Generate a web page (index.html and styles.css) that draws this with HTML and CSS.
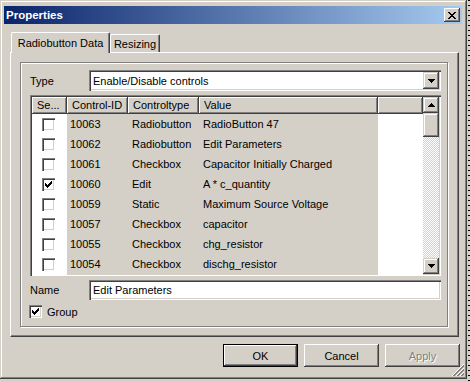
FILE: index.html
```html
<!DOCTYPE html>
<html lang="en">
<head>
    <meta charset="UTF-8">
    <title>Properties</title>
    <link rel="stylesheet" href="styles.css">
</head>
<body>
    <div class="window">
        <div class="caption">
            <span class="caption-title">Properties</span>
            <div class="caption-btn">
                <svg width="8" height="7" viewBox="0 0 8 7"><path d="M0 0h2v1h-2zM6 0h2v1h-2zM1 1h2v1h-2zM5 1h2v1h-2zM2 2h4v1h-4zM3 3h2v1h-2zM2 4h4v1h-4zM1 5h2v1h-2zM5 5h2v1h-2zM0 6h2v1h-2zM6 6h2v1h-2z" fill="#000"/></svg>
            </div>
        </div>

        <div class="tabs">
            <div class="tab active">Radiobutton Data</div>
            <div class="tab">Resizing</div>
        </div>

        <div class="panel">
            <div class="group">
                <div class="field-row">
                    <span class="field-label">Type</span>
                    <div class="combo">
                        <span class="combo-text">Enable/Disable controls</span>
                        <div class="raised-btn combo-btn">
                            <svg width="7" height="4" viewBox="0 0 7 4"><path d="M0 0h7v1h-1v1h-1v1h-1v1h-1v-1h-1v-1h-1v-1h-1z" fill="#000"/></svg>
                        </div>
                    </div>
                </div>

                <div class="listview">
                    <div class="list-body">
                        <div class="list-row list-header">
                            <div class="head-cell">Se...</div>
                            <div class="head-cell">Control-ID</div>
                            <div class="head-cell">Controltype</div>
                            <div class="head-cell">Value</div>
                            <div class="head-cell"></div>
                        </div>
                        <div class="list-row">
                            <div class="cell check-cell"><span class="checkbox"></span></div>
                            <div class="cell">10063</div><div class="cell">Radiobutton</div><div class="cell">RadioButton 47</div><div class="cell blank"></div>
                        </div>
                        <div class="list-row">
                            <div class="cell check-cell"><span class="checkbox"></span></div>
                            <div class="cell">10062</div><div class="cell">Radiobutton</div><div class="cell">Edit Parameters</div><div class="cell blank"></div>
                        </div>
                        <div class="list-row">
                            <div class="cell check-cell"><span class="checkbox"></span></div>
                            <div class="cell">10061</div><div class="cell">Checkbox</div><div class="cell">Capacitor Initially Charged</div><div class="cell blank"></div>
                        </div>
                        <div class="list-row">
                            <div class="cell check-cell"><span class="checkbox">
                                <svg width="7" height="7" viewBox="0 0 7 7"><path d="M0 2h1v1h1v1h1v-1h1v-1h1v-1h1v-1h1v3h-1v1h-1v1h-1v1h-1v1h-1v-1h-1v-1h-1v-1h-1z" fill="#000"/></svg>
                            </span></div>
                            <div class="cell">10060</div><div class="cell">Edit</div><div class="cell">A * c_quantity</div><div class="cell blank"></div>
                        </div>
                        <div class="list-row">
                            <div class="cell check-cell"><span class="checkbox"></span></div>
                            <div class="cell">10059</div><div class="cell">Static</div><div class="cell">Maximum Source Voltage</div><div class="cell blank"></div>
                        </div>
                        <div class="list-row">
                            <div class="cell check-cell"><span class="checkbox"></span></div>
                            <div class="cell">10057</div><div class="cell">Checkbox</div><div class="cell">capacitor</div><div class="cell blank"></div>
                        </div>
                        <div class="list-row">
                            <div class="cell check-cell"><span class="checkbox"></span></div>
                            <div class="cell">10055</div><div class="cell">Checkbox</div><div class="cell">chg_resistor</div><div class="cell blank"></div>
                        </div>
                        <div class="list-row">
                            <div class="cell check-cell"><span class="checkbox"></span></div>
                            <div class="cell">10054</div><div class="cell">Checkbox</div><div class="cell">dischg_resistor</div><div class="cell blank"></div>
                        </div>
                    </div>
                    <div class="scrollbar">
                        <div class="raised-btn scroll-btn">
                            <svg width="7" height="4" viewBox="0 0 7 4"><path d="M3 0h1v1h1v1h1v1h1v1h-7v-1h1v-1h1v-1h1z" fill="#000"/></svg>
                        </div>
                        <div class="raised-btn scroll-thumb"></div>
                        <div class="scroll-track"></div>
                        <div class="raised-btn scroll-btn">
                            <svg width="7" height="4" viewBox="0 0 7 4"><path d="M0 0h7v1h-1v1h-1v1h-1v1h-1v-1h-1v-1h-1v-1h-1z" fill="#000"/></svg>
                        </div>
                    </div>
                </div>

                <div class="field-row name-row">
                    <span class="field-label">Name</span>
                    <div class="textbox">Edit Parameters</div>
                </div>

                <div class="check-row">
                    <span class="checkbox">
                        <svg width="7" height="7" viewBox="0 0 7 7"><path d="M0 2h1v1h1v1h1v-1h1v-1h1v-1h1v-1h1v3h-1v1h-1v1h-1v1h-1v1h-1v-1h-1v-1h-1v-1h-1z" fill="#000"/></svg>
                    </span>
                    <span>Group</span>
                </div>
            </div>
        </div>

        <div class="buttons">
            <div class="btn default">OK</div>
            <div class="btn">Cancel</div>
            <div class="btn disabled">Apply</div>
        </div>

        <svg class="grip" width="12" height="12" viewBox="0 0 12 12">
            <g stroke-width="1" shape-rendering="crispEdges">
                <path d="M12 0L0 12M12 4L4 12M12 8L8 12" stroke="#fff"/>
                <path d="M12 1L1 12M12 2L2 12M12 5L5 12M12 6L6 12M12 9L9 12M12 10L10 12" stroke="#808080"/>
            </g>
        </svg>
    </div>
</body>
</html>
```

FILE: styles.css
```css
* {
    box-sizing: border-box;
}

body {
    margin: 0;
    width: 470px;
    height: 382px;
    overflow: hidden;
    background:
        repeating-linear-gradient(to bottom, #000 0 1px, transparent 1px 5px) 468px 0 / 2px 100% no-repeat,
        #d4d0c8;
    font-family: "Liberation Sans", Arial, sans-serif;
    font-size: 11px;
    color: #000;
}

.window {
    position: relative;
    width: 467px;
    height: 379px;
    display: flex;
    flex-direction: column;
    padding: 6px 5px 0 4px;
    background-color: #d4d0c8;
    box-shadow: inset -1px -1px #404040, inset 1px 1px #d4d0c8, inset -2px -2px #808080, inset 2px 2px #fff;
}

/* title bar */
.caption {
    height: 18px;
    display: flex;
    align-items: center;
    justify-content: space-between;
    padding: 0 2px 0 2px;
    background: linear-gradient(to right, #0a246a, #a6caf0);
    color: #fff;
    font-weight: bold;
    font-size: 11.5px;
}

.caption-btn {
    width: 16px;
    height: 14px;
    display: flex;
    align-items: center;
    justify-content: center;
    background-color: #d4d0c8;
    box-shadow: inset -1px -1px #404040, inset 1px 1px #fff, inset -2px -2px #808080;
}

.raised-btn {
    display: flex;
    align-items: center;
    justify-content: center;
    background-color: #d4d0c8;
    box-shadow: inset -1px -1px #404040, inset 1px 1px #d4d0c8, inset -2px -2px #808080, inset 2px 2px #fff;
}

/* tabs */
.tabs {
    display: flex;
    align-items: flex-end;
    height: 20px;
    margin: 8px 0 0 7px;
}

.tab {
    height: 18px;
    display: flex;
    align-items: center;
    justify-content: center;
    border: 1px solid #fff;
    border-bottom: none;
    border-right-color: #404040;
    border-radius: 2px 2px 0 0;
    box-shadow: inset -1px 0 #808080;
    width: 50px;
}

.tab.active {
    position: relative;
    z-index: 1;
    width: 99px;
    height: 21px;
    margin-bottom: -1px;
    background-color: #d4d0c8;
}

.panel {
    width: 449px;
    height: 285px;
    margin-left: 6px;
    padding: 9px 0 0 9px;
    border: 1px solid #fff;
    border-right-color: #404040;
    border-bottom-color: #404040;
    box-shadow: inset -1px -1px #808080;
}

.group {
    width: 428px;
    height: 265px;
    display: flex;
    flex-direction: column;
    padding: 7px 6px 0 9px;
    border: 1px solid #808080;
    box-shadow: inset 1px 1px #fff, 1px 1px #fff;
}

.field-row {
    display: flex;
    align-items: center;
}

.field-label {
    width: 59px;
}

.combo,
.textbox,
.listview {
    background-color: #fff;
    box-shadow: inset 1px 1px #808080, inset 2px 2px #404040, inset -1px -1px #fff, inset -2px -2px #d4d0c8;
}

.combo {
    width: 352px;
    height: 21px;
    display: flex;
    align-items: center;
    padding: 2px;
}

.combo-text {
    flex: 1;
    padding-left: 2px;
}

.combo-btn {
    width: 16px;
    height: 17px;
}

.textbox {
    width: 352px;
    height: 20px;
    padding: 0 4px;
    line-height: 20px;
}

.name-row {
    margin-top: 4px;
}

/* list view */
.listview {
    width: 411px;
    height: 181px;
    margin-top: 4px;
    padding: 2px;
    display: flex;
}

.list-body {
    flex: 1;
}

.list-row {
    display: grid;
    grid-template-columns: 35px 61px 71px 179px 1fr;
    height: 20px;
    line-height: 21px;
}

.list-header {
    height: 17px;
    line-height: 17px;
}

.head-cell {
    padding-left: 5px;
    background-color: #d4d0c8;
    box-shadow: inset -1px -1px #404040, inset 1px 1px #fff, inset -2px -2px #808080;
    white-space: nowrap;
    overflow: hidden;
}

.cell {
    padding-left: 4px;
    background-color: #d4d0c8;
    white-space: nowrap;
}

.cell:nth-child(2) {
    padding-left: 3px;
}

.cell.check-cell,
.cell.blank {
    background-color: #fff;
}

.check-cell {
    display: flex;
    align-items: center;
    padding: 0 0 1px 10px;
}

.checkbox {
    width: 13px;
    height: 13px;
    display: flex;
    align-items: center;
    justify-content: center;
    background-color: #fff;
    box-shadow: inset 1px 1px #808080, inset 2px 2px #404040, inset -1px -1px #fff, inset -2px -2px #d4d0c8;
}

.scrollbar {
    width: 16px;
    display: flex;
    flex-direction: column;
}

.scroll-btn {
    height: 16px;
}

.scroll-thumb {
    height: 24px;
}

.scroll-track {
    flex: 1;
    background: repeating-conic-gradient(#d4d0c8 0 25%, #fff 0 50%) 0 0 / 2px 2px;
}

.check-row {
    display: flex;
    align-items: center;
    gap: 5px;
    height: 13px;
    margin-top: 5px;
    margin-left: -1px;
}

/* dialog buttons */
.buttons {
    display: flex;
    justify-content: flex-end;
    gap: 6px;
    margin-top: 7px;
    padding-right: 2px;
}

.btn {
    width: 75px;
    height: 23px;
    display: flex;
    align-items: center;
    justify-content: center;
    background-color: #d4d0c8;
    box-shadow: inset -1px -1px #404040, inset 1px 1px #fff, inset -2px -2px #808080;
}

.btn.default {
    border: 1px solid #000;
}

.btn.disabled {
    color: #808080;
    text-shadow: 1px 1px #fff;
}

.grip {
    position: absolute;
    right: 3px;
    bottom: 3px;
}
```
